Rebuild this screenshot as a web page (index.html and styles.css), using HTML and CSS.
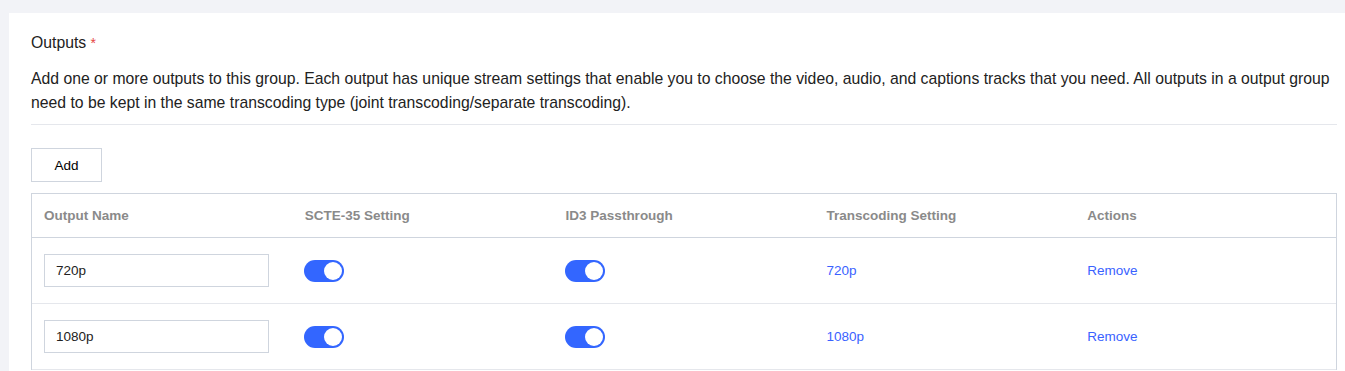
FILE: index.html
```html
<!DOCTYPE html>
<html lang="en">
<head>
<meta charset="utf-8">
<title>Outputs</title>
<link rel="stylesheet" href="styles.css">
</head>
<body>
<div class="page">
  <section class="card">
    <div class="label">Outputs <span class="req">*</span></div>
    <p class="desc">Add one or more outputs to this group. Each output has unique stream settings that enable you to choose the video, audio, and captions tracks that you need. All outputs in a output group need to be kept in the same transcoding type (joint transcoding/separate transcoding).</p>
    <div class="actions-bar"><button class="btn">Add</button></div>
    <div class="table">
      <div class="row head">
        <div class="cell">Output Name</div>
        <div class="cell">SCTE-35 Setting</div>
        <div class="cell">ID3 Passthrough</div>
        <div class="cell">Transcoding Setting</div>
        <div class="cell">Actions</div>
      </div>
      <div class="row">
        <div class="cell"><input class="input" type="text" value="720p"></div>
        <div class="cell"><span class="switch"><span class="knob"></span></span></div>
        <div class="cell"><span class="switch"><span class="knob"></span></span></div>
        <div class="cell"><a class="link">720p</a></div>
        <div class="cell"><a class="link">Remove</a></div>
      </div>
      <div class="row">
        <div class="cell"><input class="input" type="text" value="1080p"></div>
        <div class="cell"><span class="switch"><span class="knob"></span></span></div>
        <div class="cell"><span class="switch"><span class="knob"></span></span></div>
        <div class="cell"><a class="link">1080p</a></div>
        <div class="cell"><a class="link">Remove</a></div>
      </div>
    </div>
  </section>
</div>
</body>
</html>
```
FILE: styles.css
```css
* { box-sizing: border-box; }
html, body {
  margin: 0;
  padding: 0;
  background: #f2f3f7;
  overflow: hidden;
  font-family: "Liberation Sans", Arial, sans-serif;
  color: #222;
}
.page {
  padding: 13px 0 0 9px;
  width: 1400px;
}
.card {
  background: #fff;
  width: 1360px;
  padding: 18px 23px 20px 22px;
  min-height: 400px;
}
.label {
  font-size: 15.75px;
  line-height: 24px;
  color: #222;
}
.req {
  color: #e54545;
  font-size: 14px;
}
.desc {
  margin: 12px 0 0;
  font-size: 15.75px;
  line-height: 24px;
  color: #222;
  padding-bottom: 9px;
  border-bottom: 1px solid #e5e7ec;
  width: 1306px;
}
.actions-bar {
  margin-top: 23px;
}
.btn {
  width: 71px;
  height: 34px;
  background: #fff;
  border: 1px solid #cfd5de;
  font-family: inherit;
  font-size: 13.5px;
  color: #000;
  padding: 0;
  cursor: pointer;
}
.table {
  margin-top: 11px;
  width: 1306px;
  border: 1px solid #cfd5de;
  border-bottom: none;
}
.row {
  display: grid;
  grid-template-columns: repeat(5, 1fr);
  height: 66px;
  align-items: center;
  border-bottom: 1px solid #e5e7ec;
}
.row.head {
  height: 44px;
  border-bottom: 1px solid #cfd5de;
}
.head .cell {
  font-size: 13.5px;
  font-weight: bold;
  color: #8a8a8a;
}
.cell {
  padding: 0 12px;
  font-size: 13.5px;
  display: flex;
  align-items: center;
}
.input {
  width: 225px;
  height: 33px;
  border: 1px solid #cfd5de;
  padding: 0 11px;
  font-family: inherit;
  font-size: 13.5px;
  color: #222;
  outline: none;
}
.switch {
  position: relative;
  display: inline-block;
  width: 40px;
  height: 22px;
  margin-left: -1px;
  border-radius: 11px;
  background: #3366ff;
}
.knob {
  position: absolute;
  right: 2px;
  top: 2px;
  width: 18px;
  height: 18px;
  border-radius: 50%;
  background: #fff;
}
.link {
  color: #3a62ff;
  font-size: 13.5px;
  text-decoration: none;
  cursor: pointer;
}
```
